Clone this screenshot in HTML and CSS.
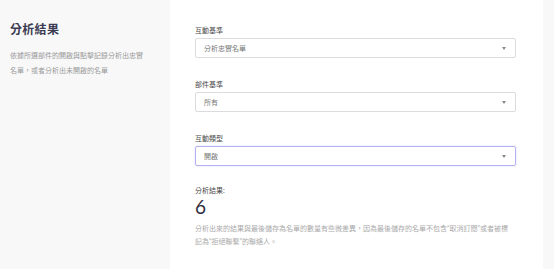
FILE: index.html
```html
<!DOCTYPE html>
<html lang="zh-Hant">
<head>
  <meta charset="UTF-8" />
  <meta name="viewport" content="width=device-width, initial-scale=1.0"/>
  <title>分析結果</title>
  <link rel="stylesheet" href="styles.css">
</head>
<body>

<aside class="sidebar">
  <h1>分析結果</h1>
  <p>依據所選部件的開啟與點擊記錄分析出忠實名單，或者分析出未開啟的名單</p>
</aside>

<main class="main">
  <div class="field">
    <label>互動基準</label>
    <div class="select">
      <span>分析忠實名單</span>
      <i class="caret"></i>
    </div>
  </div>

  <div class="field">
    <label>部件基準</label>
    <div class="select">
      <span>所有</span>
      <i class="caret"></i>
    </div>
  </div>

  <div class="field last">
    <label>互動類型</label>
    <div class="select focus">
      <span>開啟</span>
      <i class="caret"></i>
    </div>
  </div>

  <div class="result">
    <label>分析結果:</label>
    <div class="count">6</div>
    <p>分析出來的結果與最後儲存為名單的數量有些微差異，因為最後儲存的名單不包含“取消訂閱”或者被標記為“拒絕聯繫”的聯絡人。</p>
  </div>
</main>

<div class="strip"></div>

</body>
</html>
```

FILE: styles.css
```css
:root {
  --side: #f8f8f9;
  --title: #3b3b52;
  --label: #4a4a4a;
  --muted: #aaaaaa;
  --line: #dcdcdc;
  --focus: #b4b1f3;
}

* {
  margin: 0;
  padding: 0;
  box-sizing: border-box;
}

html, body {
  height: 100%;
  overflow: hidden;
}

body {
  display: flex;
  background: #fff;
  font-family: Lato, "Noto Sans CJK TC", sans-serif;
}

.sidebar {
  width: 170px;
  flex-shrink: 0;
  background: var(--side);
  padding: 23px 10px 0 10px;
}

.sidebar h1 {
  font-size: 12px;
  line-height: 14px;
  font-weight: 700;
  color: var(--title);
  letter-spacing: 0.3px;
  margin-bottom: 11px;
}

.sidebar p {
  width: 138px;
  font-size: 7px;
  line-height: 15px;
  color: #9a9a9a;
}

.main {
  flex: 1;
  padding: 25px 27px 0 25px;
}

.strip {
  width: 11px;
  flex-shrink: 0;
  background: var(--side);
}

label {
  display: block;
  font-size: 7px;
  line-height: 10px;
  color: var(--label);
  margin-bottom: 3px;
}

.field {
  margin-bottom: 21px;
}

.field.last {
  margin-bottom: 19px;
}

.select {
  height: 20px;
  display: flex;
  align-items: center;
  justify-content: space-between;
  padding: 0 8px 0 8px;
  border: 1px solid var(--line);
  border-radius: 2px;
  font-size: 7px;
  color: #777;
}

.select.focus {
  border-color: var(--focus);
  box-shadow: 0 0 2px rgba(140, 135, 240, 0.35);
}

.caret {
  width: 0;
  height: 0;
  border-left: 2.5px solid transparent;
  border-right: 2.5px solid transparent;
  border-top: 3px solid #8a8a8a;
  margin-right: 1px;
}

.result label {
  margin-bottom: 1px;
}

.count {
  font-size: 19px;
  line-height: 22px;
  font-weight: 400;
  color: #2c2c3e;
  margin-bottom: 4px;
}

.result p {
  width: 316px;
  font-size: 7px;
  line-height: 13px;
  color: var(--muted);
}
```
